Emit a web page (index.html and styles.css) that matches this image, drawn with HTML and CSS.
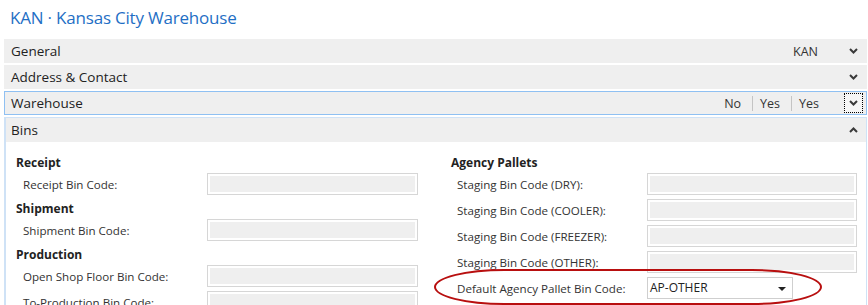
FILE: index.html
```html
<!DOCTYPE html>
<html lang="en">
<head>
    <meta charset="UTF-8">
    <title>KAN · Kansas City Warehouse</title>
    <link rel="stylesheet" href="styles.css">
</head>
<body>
    <h1 class="page-title">KAN · Kansas City Warehouse</h1>

    <div class="fasttabs">
        <div class="tab">
            <div class="tab-head">
                <span class="tab-name">General</span>
                <span class="summary"><span>KAN</span></span>
                <span class="toggle"><svg width="9" height="6" viewBox="0 0 9 6"><polyline points="1,1 4.5,4.5 8,1" /></svg></span>
            </div>
        </div>

        <div class="tab">
            <div class="tab-head">
                <span class="tab-name">Address &amp; Contact</span>
                <span class="summary"></span>
                <span class="toggle"><svg width="9" height="6" viewBox="0 0 9 6"><polyline points="1,1 4.5,4.5 8,1" /></svg></span>
            </div>
        </div>

        <div class="tab focused">
            <div class="tab-head">
                <span class="tab-name">Warehouse</span>
                <span class="summary"><span>No</span><span>Yes</span><span>Yes</span></span>
                <span class="toggle"><svg width="9" height="6" viewBox="0 0 9 6"><polyline points="1,1 4.5,4.5 8,1" /></svg></span>
            </div>
        </div>

        <div class="tab open">
            <div class="tab-head">
                <span class="tab-name">Bins</span>
                <span class="summary"></span>
                <span class="toggle"><svg width="9" height="6" viewBox="0 0 9 6"><polyline points="1,5 4.5,1.5 8,5" /></svg></span>
            </div>

            <div class="tab-body">
                <div class="col col-left">
                    <div class="group">Receipt</div>
                    <div class="field"><label>Receipt Bin Code:</label><span class="input"></span></div>
                    <div class="group">Shipment</div>
                    <div class="field"><label>Shipment Bin Code:</label><span class="input"></span></div>
                    <div class="group">Production</div>
                    <div class="field"><label>Open Shop Floor Bin Code:</label><span class="input"></span></div>
                    <div class="field"><label>To-Production Bin Code:</label><span class="input"></span></div>
                </div>

                <div class="col col-right">
                    <div class="group">Agency Pallets</div>
                    <div class="field"><label>Staging Bin Code (DRY):</label><span class="input"></span></div>
                    <div class="field"><label>Staging Bin Code (COOLER):</label><span class="input"></span></div>
                    <div class="field"><label>Staging Bin Code (FREEZER):</label><span class="input"></span></div>
                    <div class="field"><label>Staging Bin Code (OTHER):</label><span class="input"></span></div>
                    <div class="field highlight">
                        <label>Default Agency Pallet Bin Code:</label>
                        <span class="select">AP-OTHER<span class="caret"></span></span>
                        <span class="circle"></span>
                    </div>
                </div>
            </div>
        </div>
    </div>
</body>
</html>
```

FILE: styles.css
```css
body {
    margin: 0;
    font-family: "Open Sans", "Noto Sans", sans-serif;
    color: #333;
    background: #fff;
    overflow: hidden;
}
.page-title {
    margin: 0;
    padding: 6px 0 0 10px;
    height: 33px;
    font-size: 17px;
    font-weight: normal;
    line-height: 24px;
    color: #1f6fc5;
    letter-spacing: -0.2px;
}
.fasttabs {
    margin: 0 1px 0 4px;
}
.tab {
    margin-bottom: 2px;
}
.tab-head {
    display: flex;
    align-items: center;
    height: 24px;
    box-sizing: border-box;
    padding: 0 0 0 7px;
    background: #efefef;
    font-size: 13.5px;
    color: #222;
}
.tab-name {
    flex: 1;
}
.summary {
    display: flex;
    align-items: center;
    font-size: 12.5px;
    color: #333;
    margin-right: 26px;
}
.summary span + span {
    border-left: 1px solid #c4c4c4;
    margin-left: 11px;
    padding-left: 7px;
    line-height: 15px;
}
.toggle {
    width: 19px;
    height: 20px;
    box-sizing: border-box;
    margin-right: 4px;
    display: flex;
    align-items: center;
    justify-content: center;
}
.toggle svg polyline {
    fill: none;
    stroke: #3a3a3a;
    stroke-width: 2;
}
.focused .tab-head {
    border: 1px solid #8fc0f2;
    padding-left: 6px;
}
.focused .summary {
    margin-right: 25px;
}
.focused .toggle {
    border: 1px dotted #000;
    background: #f6f6f6;
    margin-right: 3px;
}
.open {
    border: 1px solid #cfe2f6;
    border-left-width: 2px;
}
.open .tab-head {
    padding-left: 5px;
}
.open .toggle {
    margin-right: 3px;
}
.tab-body {
    display: flex;
    padding: 9px 0 20px 10px;
    font-size: 11.6px;
}
.col {
    flex: none;
    width: 435px;
}
.col-right {
    width: 410px;
}
.group {
    height: 20px;
    box-sizing: border-box;
    padding-top: 3px;
    line-height: 18px;
    font-weight: bold;
    font-size: 12px;
    color: #222;
}
.field {
    display: flex;
    align-items: center;
    height: 26px;
    padding-left: 7px;
    position: relative;
}
.field label {
    flex: none;
    width: 184px;
}
.col-right .field {
    padding-left: 6px;
}
.col-right .field label {
    width: 190px;
}
.input {
    flex: none;
    width: 211px;
    height: 22px;
    box-sizing: border-box;
    border: 1px solid #d6d6d6;
    box-shadow: inset 0 0 0 2px #fff;
    background: #efefef;
}
.col-right .input {
    width: 210px;
}
.select {
    flex: none;
    width: 146px;
    height: 22px;
    box-sizing: border-box;
    border: 1px solid #cfcfcf;
    background: #fff;
    padding: 0 0 0 2px;
    line-height: 20px;
    font-size: 12px;
    color: #222;
    position: relative;
}
.caret {
    position: absolute;
    right: 6px;
    top: 9px;
    border-left: 4px solid transparent;
    border-right: 4px solid transparent;
    border-top: 4px solid #222;
}
.circle {
    position: absolute;
    left: -17px;
    top: -6px;
    width: 388px;
    height: 36px;
    box-sizing: border-box;
    border: 2px solid #b80f0f;
    border-radius: 70px / 18px;
}
```
